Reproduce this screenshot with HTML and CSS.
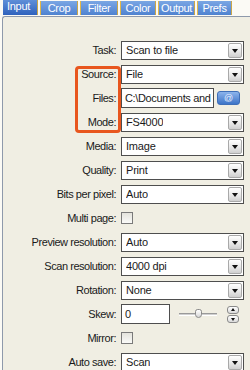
FILE: index.html
```html
<!DOCTYPE html>
<html>
<head>
<meta charset="utf-8">
<link rel="stylesheet" href="styles.css">
</head>
<body>
<div class="tabs">
  <div class="tab selected t-input">Input</div>
  <div class="tab t-crop">Crop</div>
  <div class="tab t-filter">Filter</div>
  <div class="tab t-color">Color</div>
  <div class="tab t-output">Output</div>
  <div class="tab t-prefs">Prefs</div>
</div>
<div class="panel">
  <div class="form">
    <div class="label">Task:</div>
    <div class="select"><span class="value">Scan to file</span><span class="arrow"></span></div>

    <div class="label">Source:</div>
    <div class="select"><span class="value">File</span><span class="arrow"></span></div>

    <div class="label">Files:</div>
    <div class="files">
      <div class="textbox wide">C:\Documents and</div>
      <div class="atbtn">@</div>
    </div>

    <div class="label">Mode:</div>
    <div class="select"><span class="value">FS4000</span><span class="arrow"></span></div>

    <div class="label">Media:</div>
    <div class="select"><span class="value">Image</span><span class="arrow"></span></div>

    <div class="label">Quality:</div>
    <div class="select"><span class="value">Print</span><span class="arrow"></span></div>

    <div class="label">Bits per pixel:</div>
    <div class="select"><span class="value">Auto</span><span class="arrow"></span></div>

    <div class="label">Multi page:</div>
    <div class="checkcell"><span class="check"></span></div>

    <div class="label">Preview resolution:</div>
    <div class="select"><span class="value">Auto</span><span class="arrow"></span></div>

    <div class="label">Scan resolution:</div>
    <div class="select"><span class="value">4000 dpi</span><span class="arrow"></span></div>

    <div class="label">Rotation:</div>
    <div class="select"><span class="value">None</span><span class="arrow"></span></div>

    <div class="label">Skew:</div>
    <div class="skew">
      <div class="textbox narrow">0</div>
      <div class="slider"><span class="track"></span><span class="thumb"></span></div>
      <div class="spinner"><span class="spin up"></span><span class="spin down"></span></div>
    </div>

    <div class="label">Mirror:</div>
    <div class="checkcell"><span class="check"></span></div>

    <div class="label">Auto save:</div>
    <div class="select"><span class="value">Scan</span><span class="arrow"></span></div>
  </div>
  <div class="highlight"></div>
</div>
</body>
</html>
```

FILE: styles.css
```css
html, body {
  margin: 0;
  padding: 0;
  width: 250px;
  height: 370px;
  overflow: hidden;
  background: #fbfaf5;
  font-family: "Liberation Sans", Arial, sans-serif;
  font-size: 11px;
  color: #1a1a1a;
}

.tabs {
  display: flex;
  gap: 2px;
  padding-left: 3px;
  height: 15px;
  align-items: flex-end;
  letter-spacing: -0.3px;
}

.tab {
  height: 14px;
  box-sizing: border-box;
  padding-top: 1px;
  color: #fff;
  text-align: center;
  background: linear-gradient(#7aa6e4, #4f82d0);
  border-left: 1px solid #e2b84a;
  border-right: 1px solid #c9a64a;
  line-height: 13px;
  white-space: nowrap;
}

.tab.selected {
  height: 15px;
  background: linear-gradient(#5f8fd8, #2f62bd);
  border-left: none;
  border-right: 1px solid #c9a64a;
  padding: 0 0 0 4px;
  text-align: left;
  line-height: 12px;
}

.t-input { width: 35px; }
.t-crop { width: 38px; }
.t-filter { width: 38px; }
.t-color { width: 36px; }
.t-output { width: 37px; }
.t-prefs { width: 35px; }

.panel {
  position: relative;
  margin-left: 2px;
  margin-top: 1px;
  width: 248px;
  height: 354px;
  overflow: hidden;
  border: 1px solid #8e99ab;
  border-right: none;
  border-bottom: none;
  border-radius: 3px 0 0 0;
  background: #f0eee3;
  box-sizing: border-box;
  padding-top: 21px;
}

.form {
  display: grid;
  grid-template-columns: 113px 123px;
  column-gap: 5px;
  grid-auto-rows: 24px;
  align-items: center;
}

.label {
  text-align: right;
  white-space: nowrap;
  letter-spacing: -0.45px;
}

.select {
  height: 19px;
  box-sizing: border-box;
  border: 1px solid #4e4e4e;
  background: #fff;
  display: flex;
  align-items: center;
  justify-content: space-between;
  padding: 0 1px 0 4px;
  letter-spacing: -0.2px;
}

.value {
  white-space: nowrap;
  overflow: hidden;
}

.arrow {
  position: relative;
  width: 14px;
  height: 15px;
  box-sizing: border-box;
  border: 1px solid #a9a9a9;
  border-radius: 2px;
  background: linear-gradient(#ffffff, #e6e6e6 60%, #cfcfcf);
}

.arrow::after {
  content: "";
  position: absolute;
  left: 3px;
  top: 5px;
  border-left: 3.5px solid transparent;
  border-right: 3.5px solid transparent;
  border-top: 4px solid #111;
}

.files {
  display: flex;
  align-items: center;
  gap: 3px;
}

.textbox {
  height: 20px;
  box-sizing: border-box;
  border: 1px solid #4e4e4e;
  background: #fff;
  padding: 0 3px;
  line-height: 18px;
  white-space: nowrap;
  overflow: hidden;
  letter-spacing: -0.35px;
}

.textbox.wide {
  width: 93px;
}

.textbox.narrow {
  width: 49px;
}

.atbtn {
  width: 23px;
  height: 14px;
  box-sizing: border-box;
  border-radius: 3px;
  border: 1px solid #3f6fb8;
  background: linear-gradient(#8cb4ec, #3d74c8);
  color: #e8f0ff;
  font-size: 9px;
  line-height: 12px;
  text-align: center;
}

.checkcell {
  display: flex;
  align-items: center;
}

.check {
  width: 12px;
  height: 12px;
  box-sizing: border-box;
  border: 1px solid #7a7a7a;
  background: linear-gradient(#e4e3dc, #fafaf8);
}

.skew {
  display: flex;
  align-items: center;
}

.slider {
  position: relative;
  width: 38px;
  height: 12px;
  margin-left: 9px;
}

.track {
  position: absolute;
  left: 0;
  right: 0;
  top: 5px;
  height: 3px;
  box-sizing: border-box;
  border-top: 1px solid #9a9a9a;
  border-bottom: 1px solid #ffffff;
  background: #cfcfcf;
}

.thumb {
  position: absolute;
  left: 16px;
  top: 1px;
  width: 7px;
  height: 9px;
  box-sizing: border-box;
  border: 1px solid #8a8a8a;
  border-radius: 3px 3px 4px 4px;
  background: linear-gradient(#ffffff, #d8d8d8);
}

.spinner {
  display: flex;
  flex-direction: column;
  gap: 1px;
  margin-left: 10px;
}

.spin {
  position: relative;
  width: 12px;
  height: 8px;
  box-sizing: border-box;
  border: 1px solid #8a8a8a;
  border-radius: 3px;
  background: linear-gradient(#ffffff, #dadada);
}

.spin.up::after {
  content: "";
  position: absolute;
  left: 3px;
  top: 1px;
  border-left: 2.5px solid transparent;
  border-right: 2.5px solid transparent;
  border-bottom: 3px solid #111;
}

.spin.down::after {
  content: "";
  position: absolute;
  left: 3px;
  top: 2px;
  border-left: 2.5px solid transparent;
  border-right: 2.5px solid transparent;
  border-top: 3px solid #111;
}

.highlight {
  position: absolute;
  left: 72px;
  top: 49px;
  width: 46px;
  height: 67px;
  box-sizing: border-box;
  border: 3px solid #e8561e;
  border-radius: 4px;
}
```
